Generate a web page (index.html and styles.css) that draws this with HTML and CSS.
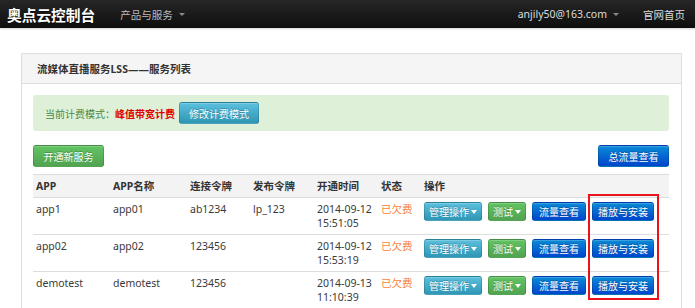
FILE: index.html
```html
<!DOCTYPE html>
<html lang="zh-CN">
<head>
<meta charset="utf-8">
<title>奥点云控制台</title>
<link rel="stylesheet" href="styles.css">
</head>
<body>
<header class="topbar">
  <div class="brand">奥点云控制台</div>
  <div class="nav-item">产品与服务<span class="caret caret-gray"></span></div>
  <div class="top-right">
    <div class="nav-item user">anjily50@163.com<span class="caret caret-gray"></span></div>
    <div class="nav-item home">官网首页</div>
  </div>
</header>

<main class="panel">
  <div class="panel-heading">流媒体直播服务LSS——服务列表</div>
  <div class="panel-body">
    <div class="alert">
      <span class="alert-label">当前计费模式：</span><span class="alert-mode">峰值带宽计费</span>
      <button class="btn btn-info btn-mid">修改计费模式</button>
    </div>

    <div class="toolbar">
      <button class="btn btn-success btn-mid">开通新服务</button>
      <button class="btn btn-primary btn-mid">总流量查看</button>
    </div>

    <div class="table-wrap">
      <table class="list">
        <thead>
          <tr>
            <th class="c1">APP</th>
            <th class="c2">APP名称</th>
            <th class="c3">连接令牌</th>
            <th class="c4">发布令牌</th>
            <th class="c5">开通时间</th>
            <th class="c6">状态</th>
            <th class="c7">操作</th>
          </tr>
        </thead>
        <tbody>
          <tr>
            <td>app1</td><td>app01</td><td>ab1234</td><td>lp_123</td>
            <td>2014-09-12 15:51:05</td><td class="owed">已欠费</td>
            <td><div class="ops">
              <button class="btn btn-info btn-sm">管理操作<span class="caret"></span></button>
              <button class="btn btn-success btn-sm">测试<span class="caret"></span></button>
              <button class="btn btn-primary btn-sm pad6">流量查看</button>
              <button class="btn btn-primary btn-sm pad5">播放与安装</button>
            </div></td>
          </tr>
          <tr>
            <td>app02</td><td>app02</td><td>123456</td><td></td>
            <td>2014-09-12 15:53:19</td><td class="owed">已欠费</td>
            <td><div class="ops">
              <button class="btn btn-info btn-sm">管理操作<span class="caret"></span></button>
              <button class="btn btn-success btn-sm">测试<span class="caret"></span></button>
              <button class="btn btn-primary btn-sm pad6">流量查看</button>
              <button class="btn btn-primary btn-sm pad5">播放与安装</button>
            </div></td>
          </tr>
          <tr>
            <td>demotest</td><td>demotest</td><td>123456</td><td></td>
            <td>2014-09-13 11:10:39</td><td class="owed">已欠费</td>
            <td><div class="ops">
              <button class="btn btn-info btn-sm">管理操作<span class="caret"></span></button>
              <button class="btn btn-success btn-sm">测试<span class="caret"></span></button>
              <button class="btn btn-primary btn-sm pad6">流量查看</button>
              <button class="btn btn-primary btn-sm pad5">播放与安装</button>
            </div></td>
          </tr>
        </tbody>
      </table>
      <div class="highlight"></div>
    </div>
  </div>
</main>
</body>
</html>
```

FILE: styles.css
```css
* { box-sizing: border-box; }

body {
  margin: 0;
  background: #fff;
  font-family: "Noto Sans", "Noto Sans CJK SC", sans-serif;
  font-size: 10.5px;
  color: #333;
}

.topbar {
  height: 28px;
  display: flex;
  align-items: center;
  background: linear-gradient(#262626, #0e0e0e);
  box-shadow: 0 1px 2px rgba(0, 0, 0, 0.18);
  padding: 0 10px 0 7px;
}

.brand {
  font-family: "Noto Sans CJK SC", sans-serif;
  font-weight: bold;
  font-size: 14.7px;
  color: #fff;
  letter-spacing: 0;
  text-shadow: 0 1px 1px rgba(0, 0, 0, 0.6);
}

.nav-item {
  color: #bdbdbd;
  font-size: 10.5px;
  display: flex;
  align-items: center;
  margin-left: 25px;
}

.top-right {
  margin-left: auto;
  display: flex;
  align-items: center;
}

.top-right .user { margin-left: 0; color: #dcdcdc; }
.top-right .home { margin-left: 24px; color: #dcdcdc; }

.caret {
  display: inline-block;
  width: 0;
  height: 0;
  border-top: 4px solid #fff;
  border-left: 3.5px solid transparent;
  border-right: 3.5px solid transparent;
  margin-left: 2px;
  vertical-align: middle;
}

.caret-gray {
  border-top-color: #8a8a8a;
  border-top-width: 3px;
  border-left-width: 3px;
  border-right-width: 3px;
  margin-left: 6px;
}

.panel {
  margin: 25px 13px 0 21px;
  border: 1px solid #dedede;
  border-bottom: none;
}

.panel-heading {
  height: 30px;
  background: #f5f5f5;
  border-bottom: 1px solid #dddddd;
  padding-left: 15px;
  display: flex;
  align-items: center;
  font-weight: bold;
  color: #333;
  font-size: 10.5px;
}

.panel-body {
  padding: 11px 12px 0 11px;
}

.alert {
  height: 36px;
  background: #dff0d8;
  border-radius: 3px;
  padding: 0 12px;
  display: flex;
  align-items: center;
  font-size: 10px;
}

.alert-label { color: #468847; }
.alert-mode { color: #e10000; font-weight: bold; }

.btn {
  border: 1px solid rgba(0, 0, 0, 0.15);
  border-radius: 3px;
  color: #fff;
  font-family: "Noto Sans CJK SC", sans-serif;
  font-size: 10px;
  padding: 0;
  display: inline-flex;
  align-items: center;
  justify-content: center;
  text-shadow: 0 -1px 0 rgba(0, 0, 0, 0.25);
  box-shadow: inset 0 1px 0 rgba(255, 255, 255, 0.2);
}

.btn-info { background: linear-gradient(#5bc0de, #2f96b4); }
.btn-success { background: linear-gradient(#62c462, #51a351); }
.btn-primary { background: linear-gradient(#0a8bd6, #0045cc); }

.btn-mid {
  height: 22px;
  padding: 0 9px;
}

.alert .btn-mid { margin-left: 4px; width: 80px; }
.toolbar .btn-mid { width: 71px; height: 22px; }

.toolbar {
  margin-top: 14px;
  display: flex;
  justify-content: space-between;
}

.table-wrap {
  position: relative;
  margin-top: 7px;
}

.list {
  width: 100%;
  border-collapse: collapse;
  table-layout: fixed;
}

.list th,
.list td {
  text-align: left;
  vertical-align: top;
  padding: 4px 3px;
  line-height: 14px;
  border-top: 1px solid #dddddd;
}

.list th {
  background: #f3f3f3;
  font-weight: bold;
  color: #333;
  font-size: 10.5px;
}

.list td {
  font-size: 10.5px;
  color: #3a3a3a;
}

.c1 { width: 77px; }
.c2 { width: 77px; }
.c3 { width: 63px; }
.c4 { width: 64px; }
.c5 { width: 64px; }
.c6 { width: 43px; }

.owed { color: #f77f3b !important; }

.ops {
  display: flex;
  gap: 6px;
  align-items: center;
}

.btn-sm {
  height: 19px;
  padding: 0 4px;
}

.pad6 { padding: 0 6px; }
.pad5 { padding: 0 5px; }

.highlight {
  position: absolute;
  left: 555px;
  top: 20px;
  width: 71px;
  height: 106px;
  border: 2px solid #e8141b;
  pointer-events: none;
}
```
